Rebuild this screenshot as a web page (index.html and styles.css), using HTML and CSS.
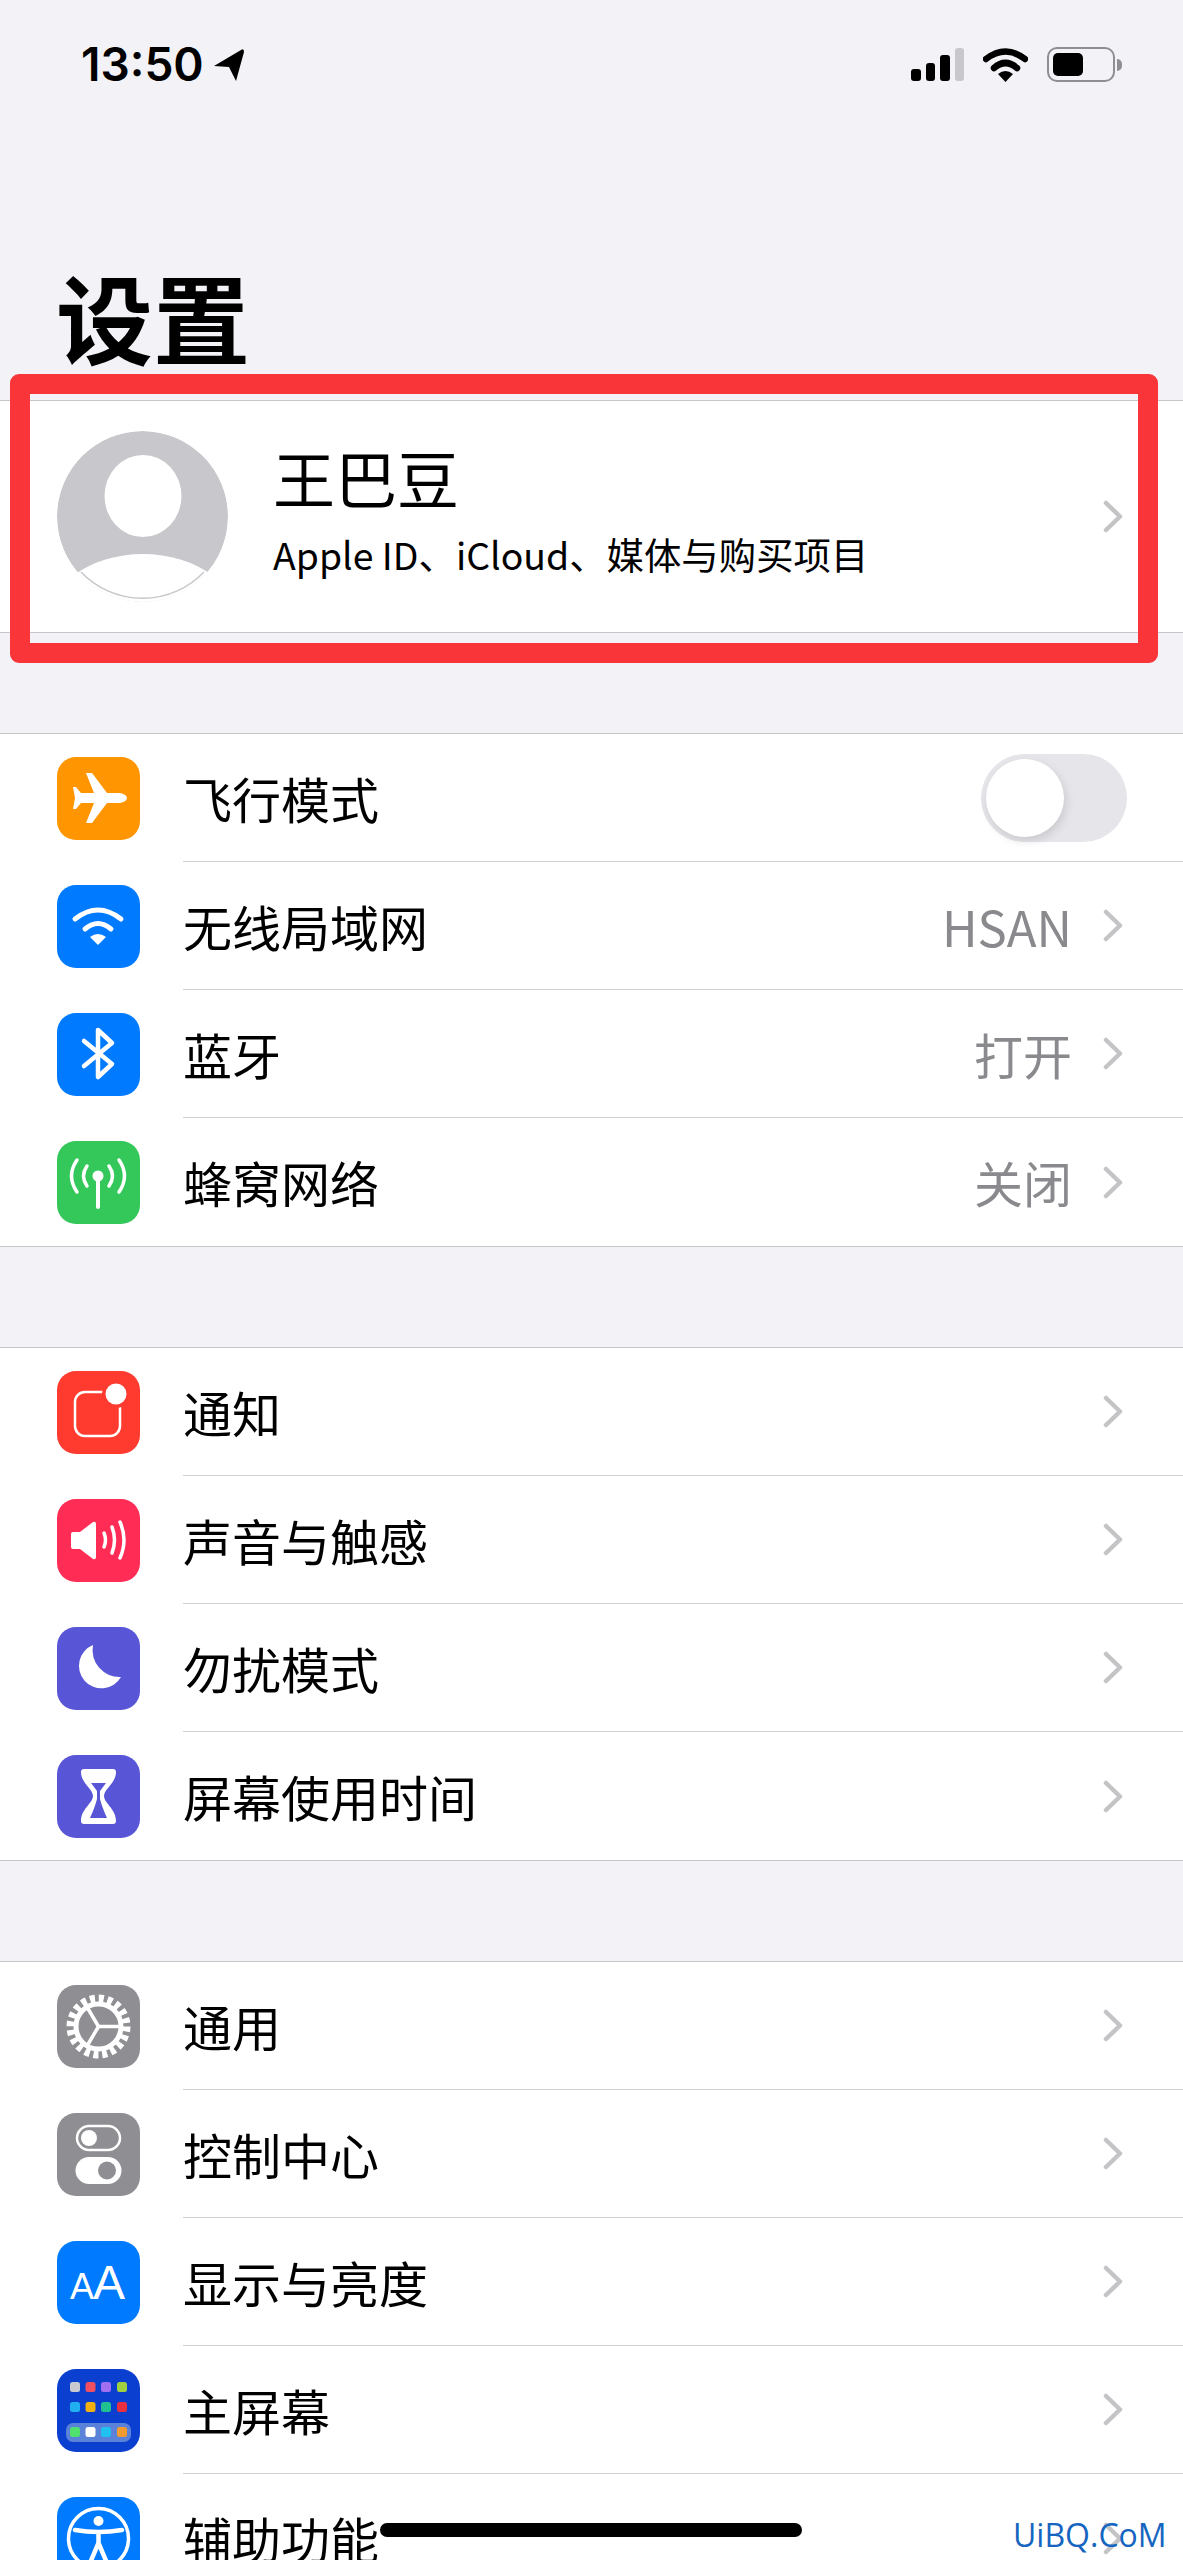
FILE: index.html
```html
<!DOCTYPE html>
<html lang="zh-CN">

<head>
  <meta charset="UTF-8" />
  <meta name="viewport" content="width=device-width, initial-scale=1.0" />
  <title>设置</title>
  <link rel="stylesheet" href="styles.css">
</head>

<body>
  <svg class="defs" width="0" height="0">
    <symbol id="chev" viewBox="0 0 20 33">
      <path d="M3 3 L17 16.500 L3 30" fill="none" stroke="#c4c4c7" stroke-width="4.500" stroke-linecap="round" stroke-linejoin="round" />
    </symbol>
  </svg>

  <div class="screen">
    <!-- Status bar -->
    <div class="status">
      <div class="status-left">
        <span class="time">13:50</span>
        <svg class="loc" viewBox="0 0 30 32"><path d="M0 17 L27 1 Q30 -1 30 3 L22 32 L15 18 Z" /></svg>
      </div>
      <div class="status-right">
        <div class="signal">
          <span class="bar bar1"></span>
          <span class="bar bar2"></span>
          <span class="bar bar3"></span>
          <span class="bar bar4"></span>
        </div>
        <svg class="status-wifi" viewBox="0 0 45 35">
          <path d="M3 12 Q22.500 -3 42 12" fill="none" stroke="#000" stroke-width="6.500" stroke-linecap="round" />
          <path d="M11 21 Q22.500 11 34 21" fill="none" stroke="#000" stroke-width="6.500" stroke-linecap="round" />
          <path d="M22.500 35 L15 27 Q22.500 21 30 27 Z" />
        </svg>
        <div class="battery">
          <div class="battery-body"><div class="battery-fill"></div></div>
          <div class="battery-tip"></div>
        </div>
      </div>
    </div>

    <h1 class="title">设置</h1>

    <!-- Profile -->
    <div class="group profile">
      <svg class="avatar" viewBox="0 0 171 171">
        <defs><clipPath id="avatarClip"><circle cx="85.500" cy="85.500" r="85.500" /></clipPath></defs>
        <g clip-path="url(#avatarClip)">
          <circle cx="85.500" cy="85.500" r="85.500" fill="#c7c7cc" />
          <ellipse cx="86" cy="65" rx="38.500" ry="41" fill="#fff" />
          <ellipse cx="86" cy="195" rx="98" ry="72" fill="#fff" />
        </g>
        <path d="M24 141 A85 85 0 0 0 147 141" fill="none" stroke="#c7c7cc" stroke-width="1.500" />
      </svg>
      <div class="profile-text">
        <div class="profile-name">王巴豆</div>
        <div class="profile-sub">Apple ID、iCloud、媒体与购买项目</div>
      </div>
      <svg class="chev"><use href="#chev" /></svg>
      <div class="red-box"></div>
    </div>

    <!-- Connectivity -->
    <div class="group">
      <div class="row">
        <svg class="icon orange" viewBox="0 0 83 83">
          <path d="M70 41 C70 38 65 36 61 36 H50 L35 16 H29 L37 36 H24 L19 30 H16 L18 41 L16 52 H19 L24 46 H37 L29 66 H35 L50 46 H61 C65 46 70 44 70 41 Z" fill="#fff" />
        </svg>
        <div class="row-body">
          <span class="label">飞行模式</span>
          <div class="toggle"><div class="knob"></div></div>
        </div>
      </div>
      <div class="row">
        <svg class="icon blue" viewBox="0 0 83 83">
          <path d="M18 34 Q41 16 64 34" fill="none" stroke="#fff" stroke-width="5" stroke-linecap="round" />
          <path d="M28 44 Q41 33 54 44" fill="none" stroke="#fff" stroke-width="5" stroke-linecap="round" />
          <path d="M41 60 L33 52 Q41 46 49 52 Z" fill="#fff" />
        </svg>
        <div class="row-body">
          <span class="label">无线局域网</span>
          <span class="value">HSAN</span>
          <svg class="chev"><use href="#chev" /></svg>
        </div>
      </div>
      <div class="row">
        <svg class="icon blue" viewBox="0 0 83 83">
          <path d="M27 28 L55 51 L41 64 V17 L55 30 L27 53" fill="none" stroke="#fff" stroke-width="4.500" stroke-linecap="round" stroke-linejoin="round" />
        </svg>
        <div class="row-body">
          <span class="label">蓝牙</span>
          <span class="value">打开</span>
          <svg class="chev"><use href="#chev" /></svg>
        </div>
      </div>
      <div class="row">
        <svg class="icon green" viewBox="0 0 83 83">
          <circle cx="41" cy="35" r="5.500" fill="#fff" />
          <path d="M41 36 V66" stroke="#fff" stroke-width="4" stroke-linecap="round" />
          <g fill="none" stroke="#fff" stroke-width="3.500" stroke-linecap="round">
            <path d="M30 25 Q23 35 30 45" />
            <path d="M52 25 Q59 35 52 45" />
            <path d="M20 19 Q9 35 20 51" />
            <path d="M62 19 Q73 35 62 51" />
          </g>
        </svg>
        <div class="row-body">
          <span class="label">蜂窝网络</span>
          <span class="value">关闭</span>
          <svg class="chev"><use href="#chev" /></svg>
        </div>
      </div>
    </div>

    <!-- Notifications -->
    <div class="group">
      <div class="row">
        <svg class="icon red" viewBox="0 0 83 83">
          <rect x="18" y="21" width="45" height="44" rx="10" fill="none" stroke="#fff" stroke-width="2.500" />
          <circle cx="59" cy="23" r="14" fill="#ff3b30" />
          <circle cx="59" cy="23" r="10.500" fill="#fff" />
        </svg>
        <div class="row-body">
          <span class="label">通知</span>
          <svg class="chev"><use href="#chev" /></svg>
        </div>
      </div>
      <div class="row">
        <svg class="icon pink" viewBox="0 0 83 83">
          <path d="M14 35 Q14 33 16 33 H23 L36 23 Q39 22 39 25 V58 Q39 61 36 60 L23 50 H16 Q14 50 14 48 Z" fill="#fff" />
          <g fill="none" stroke="#fff" stroke-width="3.500" stroke-linecap="round">
            <path d="M47 34 Q50 41 47 48" />
            <path d="M55 28 Q60 41 55 54" />
            <path d="M63 23 Q71 41 63 59" />
          </g>
        </svg>
        <div class="row-body">
          <span class="label">声音与触感</span>
          <svg class="chev"><use href="#chev" /></svg>
        </div>
      </div>
      <div class="row">
        <svg class="icon indigo" viewBox="0 0 83 83">
          <path d="M36 18 A22.500 22.500 0 1 0 64 50 A27 27 0 0 1 36 18 Z" fill="#fff" />
        </svg>
        <div class="row-body">
          <span class="label">勿扰模式</span>
          <svg class="chev"><use href="#chev" /></svg>
        </div>
      </div>
      <div class="row">
        <svg class="icon indigo" viewBox="0 0 83 83">
          <path d="M27 14 H56 Q59 14 59 17 C59 28 47 34 47 41 C47 48 59 54 59 66 Q59 69 56 69 H27 Q24 69 24 66 C24 54 36 48 36 41 C36 34 24 28 24 17 Q24 14 27 14 Z" fill="#fff" />
          <path d="M34 28 H49 L43 36 V44 Q45 52 50 63 H33 Q38 52 40 44 V36 Z" fill="#5856d6" />
        </svg>
        <div class="row-body">
          <span class="label">屏幕使用时间</span>
          <svg class="chev"><use href="#chev" /></svg>
        </div>
      </div>
    </div>

    <!-- General -->
    <div class="group">
      <div class="row">
        <svg class="icon gray" viewBox="0 0 83 83">
          <circle cx="41.500" cy="41.500" r="28" fill="none" stroke="#fff" stroke-width="8" stroke-dasharray="5 3.800" />
          <circle cx="41.500" cy="41.500" r="22.500" fill="none" stroke="#fff" stroke-width="5" />
          <g stroke="#fff" stroke-width="3.500">
            <path d="M41.500 41.500 H64" />
            <path d="M41.500 41.500 L30 22" />
            <path d="M41.500 41.500 L30 61" />
          </g>
        </svg>
        <div class="row-body">
          <span class="label">通用</span>
          <svg class="chev"><use href="#chev" /></svg>
        </div>
      </div>
      <div class="row">
        <svg class="icon gray" viewBox="0 0 83 83">
          <rect x="20" y="13" width="43" height="24" rx="12" fill="none" stroke="#fff" stroke-width="2.500" />
          <circle cx="32" cy="25" r="8" fill="#fff" />
          <rect x="18.500" y="44" width="46" height="27" rx="13.500" fill="#fff" />
          <circle cx="50" cy="57.500" r="9" fill="#8e8e93" />
        </svg>
        <div class="row-body">
          <span class="label">控制中心</span>
          <svg class="chev"><use href="#chev" /></svg>
        </div>
      </div>
      <div class="row">
        <svg class="icon blue" viewBox="0 0 83 83">
          <text class="aa-small" x="13" y="58">A</text>
          <text class="aa-big" x="36" y="58">A</text>
        </svg>
        <div class="row-body">
          <span class="label">显示与亮度</span>
          <svg class="chev"><use href="#chev" /></svg>
        </div>
      </div>
      <div class="row">
        <svg class="icon navy" viewBox="0 0 83 83">
          <rect x="13" y="13" width="10" height="10" rx="2.500" fill="#c8c8d0" />
          <rect x="28.500" y="13" width="10" height="10" rx="2.500" fill="#f05060" />
          <rect x="44" y="13" width="10" height="10" rx="2.500" fill="#a070f0" />
          <rect x="60" y="13" width="10" height="10" rx="2.500" fill="#a0d040" />
          <rect x="13" y="33" width="10" height="10" rx="2.500" fill="#20b0f0" />
          <rect x="28.500" y="33" width="10" height="10" rx="2.500" fill="#f0b010" />
          <rect x="44" y="33" width="10" height="10" rx="2.500" fill="#20c090" />
          <rect x="60" y="33" width="10" height="10" rx="2.500" fill="#e83040" />
          <rect x="9" y="54" width="65" height="19" rx="7" fill="#5a82d8" />
          <rect x="13" y="58" width="10" height="10" rx="2.500" fill="#50e070" />
          <rect x="28.500" y="58" width="10" height="10" rx="2.500" fill="#ffffff" />
          <rect x="44" y="58" width="10" height="10" rx="2.500" fill="#20c0f0" />
          <rect x="60" y="58" width="10" height="10" rx="2.500" fill="#f09a30" />
        </svg>
        <div class="row-body">
          <span class="label">主屏幕</span>
          <svg class="chev"><use href="#chev" /></svg>
        </div>
      </div>
      <div class="row">
        <svg class="icon blue" viewBox="0 0 83 83">
          <circle cx="41.500" cy="41.500" r="30" fill="none" stroke="#fff" stroke-width="3.500" />
          <circle cx="41.500" cy="24" r="5" fill="#fff" />
          <path d="M18 33 Q30 35 41.500 35 Q53 35 65 33 M41.500 35 V48 M41.500 46 L33 66 M41.500 46 L50 66" fill="none" stroke="#fff" stroke-width="4.500" stroke-linecap="round" />
        </svg>
        <div class="row-body">
          <span class="label">辅助功能</span>
          <svg class="chev"><use href="#chev" /></svg>
        </div>
      </div>
    </div>

    <div class="home-bar"></div>
    <div class="watermark">UiBQ.CoM</div>
  </div>
</body>

</html>
```

FILE: styles.css
```css
body {
  margin: 0;
  background: #f2f2f7;
  font-family: "Noto Sans CJK SC", "Noto Sans", sans-serif;
  color: #000;
}

.defs {
  display: block;
  height: 0;
}

.screen {
  position: relative;
  width: 1183px;
  height: 2560px;
  overflow: hidden;
  background: #f2f2f7;
}

/* Status bar */
.status {
  display: flex;
  justify-content: space-between;
  align-items: center;
  height: 35px;
  padding: 47px 61px 0 81px;
}

.status-left {
  display: flex;
  align-items: center;
  gap: 10px;
}

.time {
  font-family: Inter, "Liberation Sans", sans-serif;
  font-size: 46px;
  font-weight: 600;
  line-height: 35px;
}

.loc {
  width: 30px;
  height: 32px;
}

.status-right {
  display: flex;
  align-items: center;
  gap: 19px;
}

.signal {
  display: flex;
  align-items: flex-end;
  gap: 5px;
  height: 33px;
}

.bar {
  width: 9.500px;
  background: #000;
  border-radius: 3px;
}

.bar1 { height: 12px; }
.bar2 { height: 18px; }
.bar3 { height: 26px; }
.bar4 { height: 33px; background: #c7c7cc; }

.status-wifi {
  width: 45px;
  height: 35px;
}

.battery {
  display: flex;
  align-items: center;
  gap: 2px;
}

.battery-body {
  box-sizing: border-box;
  width: 68px;
  height: 35px;
  padding: 4px;
  border: 2.500px solid #8e8e93;
  border-radius: 10px;
}

.battery-fill {
  width: 30px;
  height: 100%;
  background: #000;
  border-radius: 5px;
}

.battery-tip {
  width: 5px;
  height: 12px;
  background: #8e8e93;
  border-radius: 0 6px 6px 0;
}

/* Title */
.title {
  margin: 0 0 0 56px;
  padding-top: 180px;
  height: 138px;
  font-size: 97px;
  font-weight: 700;
  line-height: 106px;
}

/* Groups */
.group {
  margin-bottom: 100px;
  background: #fff;
  border-top: 1px solid #c6c6c8;
  border-bottom: 1px solid #c6c6c8;
}

.row {
  display: flex;
  align-items: center;
  height: 128px;
}

.row-body {
  display: flex;
  flex: 1;
  align-items: center;
  align-self: stretch;
  margin-left: 43px;
  padding-right: 60px;
  border-bottom: 1px solid #d1d1d6;
}

.row:last-child .row-body {
  border-bottom: none;
}

.icon {
  flex: none;
  width: 83px;
  height: 83px;
  margin-left: 57px;
  border-radius: 19px;
}

.orange { background: #ff9500; }
.blue { background: #007aff; }
.green { background: #34c759; }
.red { background: #ff3b30; }
.pink { background: #ff2d55; }
.indigo { background: #5856d6; }
.gray { background: #8e8e93; }
.navy { background: #0a3fd0; }

.aa-small,
.aa-big {
  font-family: "Liberation Sans", sans-serif;
  fill: #fff;
}

.aa-small { font-size: 36px; }
.aa-big { font-size: 48px; }

.label {
  flex: 1;
  font-size: 49px;
  line-height: 70px;
}

.value {
  margin-right: 31px;
  font-size: 49px;
  line-height: 70px;
  color: #8a8a8e;
}

.chev {
  flex: none;
  width: 20px;
  height: 33px;
}

/* Toggle */
.toggle {
  box-sizing: border-box;
  width: 146px;
  height: 88px;
  margin-right: -4px;
  padding: 5px;
  background: #e5e5ea;
  border-radius: 44px;
}

.knob {
  width: 78px;
  height: 78px;
  background: #fff;
  border-radius: 50%;
  box-shadow: 2px 4px 10px rgba(0, 0, 0, 0.12);
}

/* Profile */
.profile {
  position: relative;
  display: flex;
  align-items: center;
  height: 231px;
  padding-right: 60px;
}

.avatar {
  flex: none;
  width: 171px;
  height: 171px;
  margin-left: 57px;
}

.profile-text {
  flex: 1;
  margin-left: 45px;
  padding-bottom: 22px;
}

.profile-name {
  font-size: 62px;
  line-height: 90px;
  margin-bottom: 6px;
}

.profile-sub {
  font-size: 37.400px;
  line-height: 52px;
}

/* Annotation drawn on top of the screenshot */
.red-box {
  position: absolute;
  top: -27px;
  left: 10px;
  width: 1148px;
  height: 289px;
  box-sizing: border-box;
  border: 20px solid #fa3539;
  border-radius: 9px;
}

.home-bar {
  position: absolute;
  left: 380px;
  top: 2523px;
  width: 422px;
  height: 14px;
  background: #000;
  border-radius: 7px;
}

.watermark {
  position: absolute;
  left: 1013px;
  top: 2514px;
  font-family: "Open Sans", "Liberation Sans", sans-serif;
  font-size: 32px;
  line-height: 42px;
  color: #1565c0;
}
```
